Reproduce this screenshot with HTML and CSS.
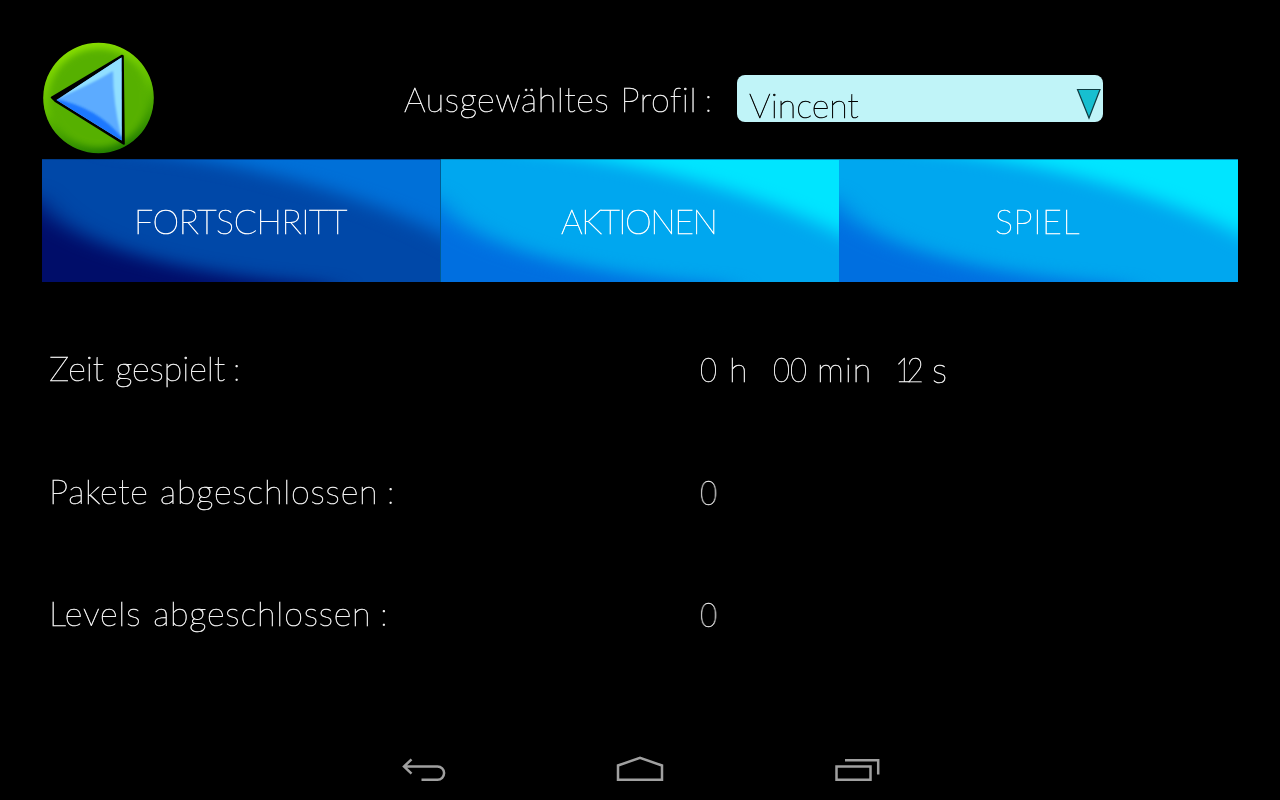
FILE: index.html
```html
<!DOCTYPE html>
<html lang="de">
<head>
<meta charset="utf-8">
<title>Profil</title>
<link rel="stylesheet" href="styles.css">
</head>
<body>
<div class="screen">
  <header class="header">
    <svg class="back" viewBox="0 0 112 112">
      <defs>
        <clipPath id="disc"><circle cx="56.500" cy="56" r="55.300"/></clipPath>
        <clipPath id="tri"><path d="M14.500 58L79.500 15.500L79.700 98.500Z"/></clipPath>
        <filter id="soft" x="-20%" y="-20%" width="140%" height="140%"><feGaussianBlur stdDeviation="3.200"/></filter>
        <filter id="fine" x="-20%" y="-20%" width="140%" height="140%"><feGaussianBlur stdDeviation="1.200"/></filter>
        <linearGradient id="rim" x1="0.300" y1="0" x2="0.600" y2="1"><stop offset="0" stop-color="#8be000"/><stop offset=".5" stop-color="#62bd00"/><stop offset="1" stop-color="#1f7c00"/></linearGradient>
      </defs>
      <g clip-path="url(#disc)">
        <circle cx="56.500" cy="56" r="56" fill="url(#rim)"/>
        <circle cx="56.500" cy="56" r="49" fill="#57b000" filter="url(#soft)"/>
      </g>
      <path d="M9.500 55.500L80 13.500L81 14L82 102L81 101.500L13 59Z" fill="#000" stroke="#000" stroke-width="1.600" stroke-linejoin="round"/>
      <g clip-path="url(#tri)">
        <path d="M10 58L82 10V102Z" fill="#5cabff"/>
        <path d="M12 58Q50 42 71 29Q71 60 79 94L88 98V5Z" fill="#91dfff" filter="url(#fine)"/>
        <path d="M8 56Q55 64 81 97L80 106Z" fill="#1f78ff" filter="url(#fine)"/>
      </g>
    </svg>
    <span class="text profile-label">Ausgewähltes Profil<span class="colon"> :</span></span>
    <div class="select">
      <span class="text select-value">Vincent</span>
      <svg class="caret" viewBox="0 0 26 32"><path d="M1.500 1.500H24L13 30Z" fill="#17bfd0" stroke="#103c42" stroke-width="1.200"/></svg>
    </div>
  </header>

  <nav class="tabs">
    <div class="tab tab-active">
      <svg class="sheen" viewBox="0 0 398 123" preserveAspectRatio="none">
        <defs><filter id="sheen-blur" x="-20%" y="-40%" width="140%" height="180%" color-interpolation-filters="sRGB"><feGaussianBlur stdDeviation="15 8"/></filter></defs>
        <path class="glow" filter="url(#sheen-blur)" d="M70 -12Q290 10 440 96V-40H70Z"/>
        <path class="shade" filter="url(#sheen-blur)" d="M-10 35Q40 108 290 127V160H-40V35Z"/>
      </svg>
      <span class="text tab-text fortschritt">FORTSCHRITT</span>
    </div>
    <div class="tab">
      <svg class="sheen" viewBox="0 0 398 123" preserveAspectRatio="none">
        <path class="glow" filter="url(#sheen-blur)" d="M70 -12Q290 10 440 96V-40H70Z"/>
        <path class="shade" filter="url(#sheen-blur)" d="M-10 35Q40 108 290 127V160H-40V35Z"/>
      </svg>
      <span class="text tab-text aktionen">AKTIONEN</span>
    </div>
    <div class="tab">
      <svg class="sheen" viewBox="0 0 398 123" preserveAspectRatio="none">
        <path class="glow" filter="url(#sheen-blur)" d="M70 -12Q290 10 440 96V-40H70Z"/>
        <path class="shade" filter="url(#sheen-blur)" d="M-10 35Q40 108 290 127V160H-40V35Z"/>
      </svg>
      <span class="text tab-text spiel">SPIEL</span>
    </div>
  </nav>

  <main class="stats">
    <div class="row">
      <span class="text label zeit">Zeit gespielt<span class="colon"> :</span></span>
      <span class="text time"><span class="t-zero"><span class="digits">0</span></span><span class="t-h">h</span><span class="t-mm"><span class="digits">00</span></span><span class="t-min">min</span><span class="t-ss"><span class="digits digits-tight">12</span></span><span class="t-s">s</span></span>
    </div>
    <div class="row">
      <span class="text label pakete">Pakete abgeschlossen<span class="colon"> :</span></span>
      <span class="text digits">0</span>
    </div>
    <div class="row">
      <span class="text label levels">Levels abgeschlossen<span class="colon"> :</span></span>
      <span class="text digits">0</span>
    </div>
  </main>

  <footer class="navbar">
    <svg class="nav-icon" viewBox="0 0 50 30"><path d="M6 11.500H39.500A6.500 6.500 0 0 1 39.500 24.700H23.500M13.500 4.300L6 11.500L13.500 18.700"/></svg>
    <svg class="nav-icon" viewBox="0 0 50 30"><path d="M3 24.700V10.500L25 2.800L47 10.500V24.700Z"/></svg>
    <svg class="nav-icon" viewBox="0 0 50 30"><path d="M4.500 11.500H38.500V24.700H4.500ZM13 5.200H46.200V19.500"/></svg>
  </footer>
</div>
</body>
</html>
```
FILE: styles.css
```css
* { box-sizing: border-box; }
body { margin: 0; background: #000; }
.screen {
  width: 1280px;
  height: 800px;
  background: #000;
  display: flex;
  flex-direction: column;
  overflow: hidden;
}
.text {
  font-family: Lato, sans-serif;
  font-weight: 100;
  font-size: 34px;
  line-height: 40px;
  color: #f0f0f0;
  -webkit-text-stroke: 0.6px currentColor;
  white-space: pre;
  will-change: transform;
}
.colon {
  font-family: Inter, sans-serif;
  font-weight: 200;
  font-size: 30px;
  -webkit-text-stroke: 0;
  word-spacing: -1px;
}
.header {
  height: 159px;
  padding: 42px 0 0 42px;
  display: flex;
  align-items: flex-start;
}
.back { width: 112px; height: 112px; }
.profile-label { width: 333px; margin: 37px 0 0 250px; letter-spacing: .6px; word-spacing: 1px; }
.profile-label .colon { word-spacing: -2px; }
.select {
  width: 366px;
  height: 47px;
  margin-top: 32.500px;
  padding-left: 12px;
  border-radius: 8px;
  background: #c0f4f8;
  display: flex;
  justify-content: space-between;
}
.select-value { color: #000; margin-top: 10px; }
.caret { width: 26px; height: 32px; margin-top: 13px; margin-right: 1px; }
.tabs {
  height: 123px;
  margin: 0 42px;
  display: grid;
  grid-template-columns: 399px 398px 399px;
}
.tab {
  display: grid;
  place-items: center;
  overflow: hidden;
  background: #00a7ef;
  border-top: 1px solid #078aba;
}
.tab-active { background: #0048a8; border-top-color: #003b87; border-right: 1px solid #005b94; }
.sheen, .tab-text { grid-area: 1 / 1; }
.sheen { width: 100%; height: 122px; }
.tab-text { z-index: 1; margin-right: 2px; color: #fff; }
.fortschritt { letter-spacing: -.4px; }
.aktionen { letter-spacing: -1.500px; }
.spiel { letter-spacing: .6px; }
.glow { fill: #00e5ff; }
.shade { fill: #006fe0; }
.tab-active .glow { fill: #0070d8; }
.tab-active .shade { fill: #000d69; }
.stats { flex: 1; padding: 26px 0 0 49px; }
.row { height: 122.500px; display: flex; align-items: center; }
.label { width: 651px; }
.zeit { word-spacing: 1.500px; }
.pakete { letter-spacing: .8px; word-spacing: 1px; }
.levels { letter-spacing: .8px; word-spacing: 1.500px; }
.time { display: flex; }
.digits { display: inline-block; transform: scaleX(.86); transform-origin: left; }
.digits-tight { letter-spacing: -6px; }
.t-zero { width: 29px; }
.t-h { width: 44px; }
.t-mm { width: 44px; }
.t-min { width: 78px; letter-spacing: .9px; }
.t-ss { width: 37px; }
.t-s { font-size: 36px; }
.navbar {
  height: 45px;
  display: flex;
  justify-content: center;
  gap: 167px;
}
.nav-icon { width: 50px; height: 30px; fill: none; stroke: #a0a0a0; stroke-width: 2.500; }
```
